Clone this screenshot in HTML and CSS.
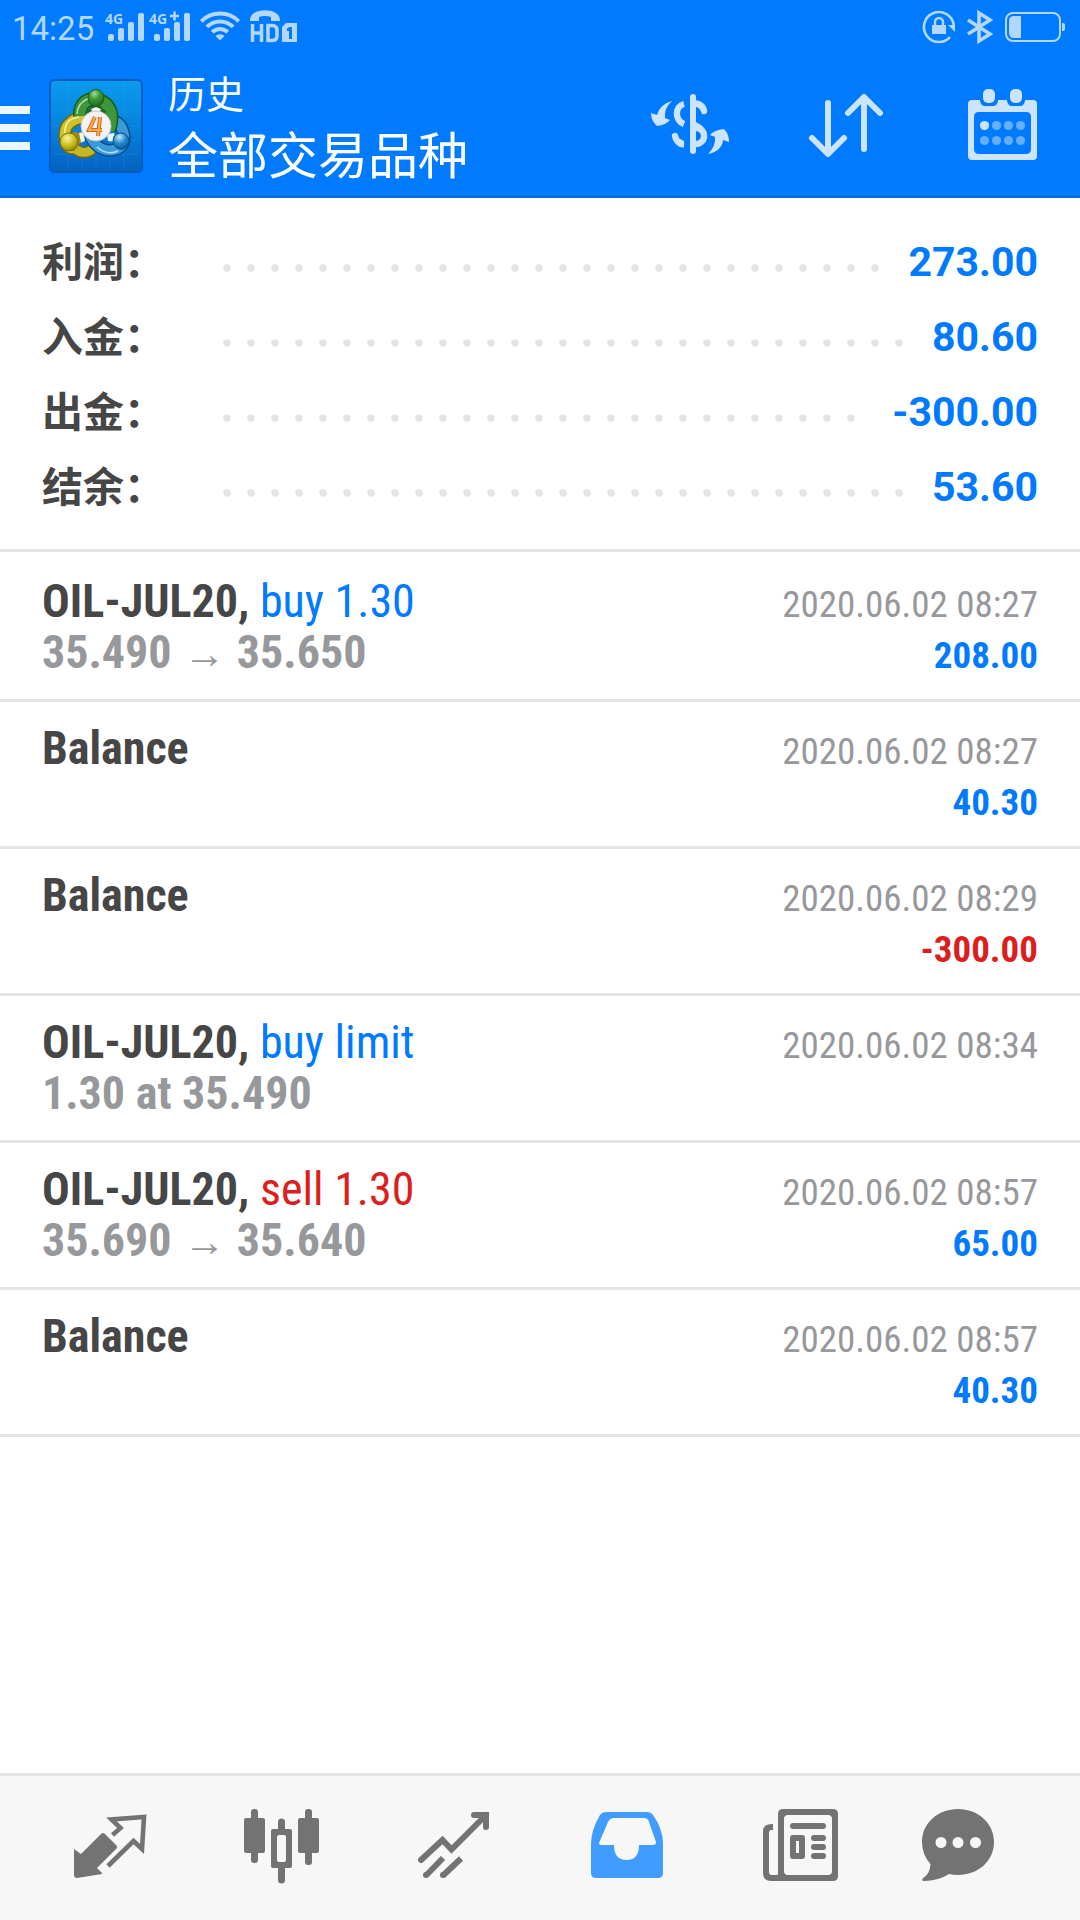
FILE: index.html
```html
<!DOCTYPE html>
<html lang="zh-CN">
<head>
<meta charset="utf-8">
<meta name="viewport" content="width=device-width, initial-scale=1">
<title>历史</title>
<link rel="stylesheet" href="styles.css">
</head>
<body>
<header class="header">
  <div class="status">
    <span class="clock">14:25</span>
    <svg class="signal" width="40" height="54" viewBox="0 0 40 54" aria-label="4G">
      <rect x="3" y="34" width="6" height="7" rx="2"/><rect x="13" y="28" width="6" height="13" rx="2"/><rect x="23" y="22" width="6" height="19" rx="2"/><rect x="33" y="13" width="6" height="28" rx="2"/>
      <text class="net" x="0" y="24">4G</text>
    </svg>
    <svg class="signal" width="42" height="54" viewBox="0 0 42 54" aria-label="4G+">
      <rect x="5" y="34" width="6" height="7" rx="2"/><rect x="15" y="28" width="6" height="13" rx="2"/><rect x="25" y="22" width="6" height="19" rx="2"/><rect x="35" y="13" width="6" height="28" rx="2"/>
      <text class="net" x="0" y="24">4G</text><path d="M21 16h9M25.500 11.500v9" stroke="currentColor" stroke-width="2.500"/>
    </svg>
    <svg class="wifi" width="42" height="54" viewBox="0 0 42 54" aria-label="Wi-Fi">
      <g fill="none" stroke="currentColor" stroke-width="4"><path d="M2.300 21.300a26.500 26.500 0 0 1 37.400 0"/><path d="M7.900 26.900a18.500 18.500 0 0 1 26.200 0"/><path d="M13.200 32.200a11 11 0 0 1 15.600 0"/></g>
      <path d="M21 40.500l-4.500-4.500a6.400 6.400 0 0 1 9 0z"/>
    </svg>
    <svg class="hd" width="48" height="54" viewBox="0 0 48 54" aria-label="HD1">
      <path d="M0 20C0 7 30 7 30 20v1h-9v-4q-6-2-12 0v4H0z"/>
      <path fill-rule="evenodd" d="M36 23h11v19H32V27zM37 28.500v2.500h2v8h3V27h-2.500z"/>
      <path d="M2.500 24v18M11.500 24v18M2.500 33h9M18 25.500v15h4q5 0 5-5v-5q0-5-5-5z" fill="none" stroke="currentColor" stroke-width="3.500"/>
    </svg>
    <span class="spacer"></span>
    <svg width="36" height="54" viewBox="0 0 36 54" aria-label="方向锁定">
      <path d="M31.800 25A15 15 0 1 0 28 37.200" fill="none" stroke="currentColor" stroke-width="2.600"/>
      <path d="M26 25h7v7z"/>
      <rect x="10" y="25" width="14" height="9"/><path d="M13 26v-4a4 4 0 0 1 8 0v4" fill="none" stroke="currentColor" stroke-width="2.400"/>
    </svg>
    <svg class="bluetooth" width="28" height="54" viewBox="0 0 28 54" aria-label="蓝牙"><path d="M2 20l22 14-11 7V13l11 7L2 34" fill="none" stroke="currentColor" stroke-width="3.600"/></svg>
    <svg class="battery" width="62" height="54" viewBox="0 0 62 54" aria-label="电量">
      <rect x="2" y="13" width="54" height="28" rx="7" fill="none" stroke="currentColor" stroke-width="2"/><path d="M10 16h7v22h-7q-5 0-5-5V21q0-5 5-5z"/><path d="M58 23h1q2 0 2 2v4q0 2-2 2h-1z"/>
    </svg>
  </div>
  <div class="toolbar">
    <button class="menu" type="button" aria-label="菜单"><span></span><span></span><span></span></button>
    <svg class="logo" width="94" height="94" viewBox="-1 -1 94 94" aria-hidden="true">
      <defs>
        <linearGradient id="tile" x1="0" y1="0" x2="0" y2="1"><stop offset="0" stop-color="#0a9bee"/><stop offset=".5" stop-color="#0682dd"/><stop offset="1" stop-color="#0562c0"/></linearGradient>
        <radialGradient id="gh" cx=".4" cy=".25" r=".8"><stop offset="0" stop-color="#a5dc9c"/><stop offset=".4" stop-color="#3f9a3c"/><stop offset="1" stop-color="#1a651e"/></radialGradient>
        <radialGradient id="yh" cx=".4" cy=".3" r=".8"><stop offset="0" stop-color="#fbf5a0"/><stop offset=".5" stop-color="#cdbf1d"/><stop offset="1" stop-color="#827309"/></radialGradient>
        <radialGradient id="bh" cx=".4" cy=".25" r=".8"><stop offset="0" stop-color="#bde9fc"/><stop offset=".5" stop-color="#288ccb"/><stop offset="1" stop-color="#07569a"/></radialGradient>
      </defs>
      <rect x="0" y="0" width="92" height="92" rx="5" fill="url(#tile)" stroke="#075dbb" stroke-width="2"/>
      <path d="M18 2v88M32 2v88M46 2v88M60 2v88M74 2v88M2 18h88M2 32h88M2 46h88M2 60h88M2 74h88" stroke="#36b0f2" stroke-opacity=".2"/>
      <g fill="none">
        <path d="M28 66C15 76 10 50 20 43Q27 36 38 39" stroke="#71680c" stroke-width="13"/><path d="M21 65C31 77 46 74 45 58" stroke="#71680c" stroke-width="12"/>
        <path d="M28 66C15 76 10 50 20 43Q27 36 38 39" stroke="#cfc22c" stroke-width="10"/><path d="M21 65C31 77 46 74 45 58" stroke="#c5b822" stroke-width="9"/>
        <path d="M40 56C46 68 56 73 67 69Q77 64 73 51 70 41 59 40" stroke="#064f91" stroke-width="13"/><path d="M40 56C46 68 56 73 67 69Q77 64 73 51 70 41 59 40" stroke="#3c9bd6" stroke-width="10"/>
        <path d="M30 36C29 18 46 15 56 24Q65 34 59 50" stroke="#155d19" stroke-width="14"/><path d="M30 36C29 18 46 15 56 24Q65 34 59 50" stroke="#3f953a" stroke-width="11"/>
        <path d="M27 34C28 20 42 14 53 20" stroke="#b2e3a7" stroke-width="1.500"/><path d="M15 53Q14 39 29 37" stroke="#f6efa1" stroke-width="1.500"/><path d="M47 67Q57 76 68 71" stroke="#b1e4fa" stroke-width="1.500"/>
      </g>
      <path d="M36 32l6-6h8l7 6-7 2-10 1z" fill="#1d6a22"/>
      <path d="M41 29l5-2 5 2-2 4h-6z" fill="#eef5ea"/><path d="M25 54l8-2 2 9-8 3z" fill="#f8f5d9"/><path d="M57 54l7-1 2 9-8-1z" fill="#e7f6ff"/>
      <ellipse cx="46" cy="18" rx="8" ry="8.500" fill="url(#gh)" stroke="#165e1a"/>
      <path d="M18 57q4-7 11-4l2 9-7 9q-13-3-6-14z" fill="#9b8c10"/><circle cx="19" cy="62" r="9" fill="url(#yh)" stroke="#7b6f0b"/>
      <path d="M63 57q5-5 11-4l6 8-8 9q-7-2-9-13z" fill="#136aab"/><circle cx="71" cy="61" r="8" fill="url(#bh)" stroke="#07508f"/>
      <circle cx="46" cy="46" r="15" fill="#f3f3f6" stroke="#c8c8ce"/>
      <path d="M45 37L39 50h13M50 37L48 56" fill="none" stroke="#cf6815" stroke-width="4"/><path d="M45 37L39 50h13M50 37L48 56" fill="none" stroke="#ffab51" stroke-width="2"/>
    </svg>
    <div class="titles">
      <h1 class="title">历史</h1>
      <p class="symbol">全部交易品种</p>
    </div>
    <button class="action" type="button" aria-label="交易品种">
      <svg width="96" height="96" viewBox="0 0 96 96">
        <rect x="48" y="18" width="6" height="60" rx="3"/>
        <g fill="none" stroke="currentColor" stroke-width="6.400" stroke-linecap="round"><path stroke-linecap="butt" d="M42 28C33 30 32 44 42 48"/><path d="M33 60Q34.500 66 39 68"/><path d="M54 27.500Q61 29 62 35"/></g>
        <path d="M42 65v7l-6-3 2-6z"/><path fill-rule="evenodd" d="M53 46C69 51 70 70 53 71.500zM54 55v10q5-1 5-5t-5-5z"/>
        <path d="M30 25Q22 32 23 42l5 2q-4 5-13 6-6-5-6-13l6 2Q18 28 30 25z"/><path d="M66 78Q80 75 81 64l6 2q0-8-5-13-10 1-14 6l5 2q1 9-7 17z"/>
      </svg>
    </button>
    <button class="action" type="button" aria-label="排序">
      <svg width="96" height="96" viewBox="0 0 96 96"><path d="M30 27v50M14 62l16 16 16-16M66 73V22M50 37l16-16 16 16" fill="none" stroke="currentColor" stroke-width="6" stroke-linecap="round" stroke-linejoin="round"/></svg>
    </button>
    <button class="action" type="button" aria-label="日期">
      <svg width="96" height="96" viewBox="0 0 96 96">
        <path fill-rule="evenodd" d="M18 24h8v1q1 5 5 5h8q4 0 5-5v-1h9v1q1 5 5 5h8q4 0 5-5v-1h8q4 0 4 4v52q0 4-4 4H18q-4 0-4-4V28q0-4 4-4zM25 36q-5 0-5 5v32q0 5 5 5h47q5 0 5-5V41q0-5-5-5z"/>
        <rect x="29" y="13" width="12" height="14" rx="5"/><rect x="56" y="13" width="12" height="14" rx="5"/><circle cx="30.500" cy="49.500" r="4.600"/>
        <g opacity=".5"><circle cx="42.500" cy="49.500" r="4.600"/><circle cx="54.500" cy="49.500" r="4.600"/><circle cx="66.500" cy="49.500" r="4.600"/><circle cx="30.500" cy="64.500" r="4.600"/><circle cx="42.500" cy="64.500" r="4.600"/><circle cx="54.500" cy="64.500" r="4.600"/><circle cx="66.500" cy="64.500" r="4.600"/></g>
      </svg>
    </button>
  </div>
</header>

<main class="content">
  <dl class="summary">
    <div class="total"><dt>利润：</dt><dd>273.00</dd></div>
    <div class="total"><dt>入金：</dt><dd>80.60</dd></div>
    <div class="total"><dt>出金：</dt><dd>-300.00</dd></div>
    <div class="total"><dt>结余：</dt><dd>53.60</dd></div>
  </dl>
  <ul class="deals">
    <li class="deal">
      <div class="info"><p><b>OIL-JUL20,</b> <span class="buy">buy 1.30</span></p><p class="price">35.490 <span class="arrow">→</span> 35.650</p></div>
      <div class="result"><time>2020.06.02 08:27</time><b class="buy">208.00</b></div>
    </li>
    <li class="deal">
      <div class="info"><p><b>Balance</b></p></div>
      <div class="result"><time>2020.06.02 08:27</time><b class="buy">40.30</b></div>
    </li>
    <li class="deal">
      <div class="info"><p><b>Balance</b></p></div>
      <div class="result"><time>2020.06.02 08:29</time><b class="sell">-300.00</b></div>
    </li>
    <li class="deal">
      <div class="info"><p><b>OIL-JUL20,</b> <span class="buy">buy limit</span></p><p class="price">1.30 at 35.490</p></div>
      <div class="result"><time>2020.06.02 08:34</time></div>
    </li>
    <li class="deal">
      <div class="info"><p><b>OIL-JUL20,</b> <span class="sell">sell 1.30</span></p><p class="price">35.690 <span class="arrow">→</span> 35.640</p></div>
      <div class="result"><time>2020.06.02 08:57</time><b class="buy">65.00</b></div>
    </li>
    <li class="deal">
      <div class="info"><p><b>Balance</b></p></div>
      <div class="result"><time>2020.06.02 08:57</time><b class="buy">40.30</b></div>
    </li>
  </ul>
</main>

<nav class="tabs">
  <button class="tab" type="button" aria-label="行情"><svg width="96" height="96" viewBox="0 0 96 96">
    <path d="M14 49l7 5 20-20q2-2 4 0l11 11q2 2 0 4L37 68l5 5v1l-25 4q-3 0-3-3z"/>
    <path d="M52.500 35l8-7-9-8.500L84 17l-2 32-8.500-8L48 66" fill="none" stroke="currentColor" stroke-width="4.600"/>
  </svg></button>
  <button class="tab" type="button" aria-label="图表"><svg width="96" height="96" viewBox="0 0 96 96">
    <rect x="11" y="18" width="21" height="35" rx="2"/><rect x="18" y="9" width="7" height="54" rx="3"/><rect x="65" y="18" width="21" height="35" rx="2"/><rect x="72" y="9" width="7" height="56" rx="3"/>
    <path d="M45 22a3.500 3.500 0 0 1 7 0v8h-7zM45 66h7v14a3.500 3.500 0 0 1-7 0z"/><path fill-rule="evenodd" d="M40 29h17q2 0 2 2v35q0 2-2 2H40q-2 0-2-2V31q0-2 2-2zM46 35q-2 0-2 2v23q0 2 2 2h5q2 0 2-2V37q0-2-2-2z"/>
  </svg></button>
  <button class="tab" type="button" aria-label="交易"><svg width="96" height="96" viewBox="0 0 96 96">
    <g fill="none" stroke="currentColor" stroke-width="6"><path stroke-linecap="round" d="M15 60l21.500-20 9 9.500L80 15M68 15h12v12"/><path d="M37 58L20 75.500M55 58.500L37 75.500"/></g><circle cx="20" cy="75" r="3"/><circle cx="37" cy="75" r="3"/>
  </svg></button>
  <button class="tab active" type="button" aria-label="历史" aria-current="page"><svg width="96" height="96" viewBox="0 0 96 96">
    <path fill-rule="evenodd" d="M29 12h40q4 0 6 3 10 14 10 29v29q0 5-5 5H18q-5 0-5-5V44q0-14 9-29 2-3 7-3zM36 18q-4 0-6 4l-9 21q0 2 2 2h13q0 15 12.500 15T61 45h14q3 0 3-3l-7-20q-1-4-5-4z"/>
  </svg></button>
  <button class="tab" type="button" aria-label="新闻"><svg width="96" height="96" viewBox="0 0 96 96">
    <path fill-rule="evenodd" d="M32 9h50q5 0 5 5v62q0 5-5 5H20q-8 0-8-8V31q0-7 9-7h1v6h-2q-2 0-2 3v39q0 3 3 3h5q1 0 1-2V14q0-5 5-5zM37 15q-4 0-4 4v52q0 4 4 4h40q4 0 4-4V19q0-4-4-4z"/>
    <rect x="39" y="23" width="36" height="6" rx="3"/><path fill-rule="evenodd" d="M42 35h9q3 0 3 3v18q0 3-3 3h-9q-3 0-3-3V38q0-3 3-3zM45 41v12h3V41z"/><rect x="60" y="35" width="15" height="6" rx="3"/><rect x="60" y="44" width="15" height="6" rx="3"/><rect x="60" y="53" width="15" height="6" rx="3"/>
  </svg></button>
  <button class="tab" type="button" aria-label="消息"><svg width="96" height="96" viewBox="0 0 96 96">
    <path fill-rule="evenodd" d="M34 9c20 0 36 14 36 33S54 75 34 75q-5 0-9-1-11 7-25 7-3 0-1-3 7-4 7.500-14Q-2 55-2 42C-2 23 14 9 34 9zM17 37a5.500 5.500 0 1 0 0 11 5.500 5.500 0 0 0 0-11zM34 37a5.500 5.500 0 1 0 0 11 5.500 5.500 0 0 0 0-11zM51.500 37a5.500 5.500 0 1 0 0 11 5.500 5.500 0 0 0 0-11z"/>
  </svg></button>
</nav>
</body>
</html>
```

FILE: styles.css
```css
* { box-sizing: border-box; margin: 0; padding: 0; }

body {
  min-height: 100vh;
  display: flex;
  flex-direction: column;
  background: #fff;
  color: #464646;
  font-family: Roboto, "Noto Sans CJK SC", sans-serif;
}

button { border: 0; background: none; color: inherit; font: inherit; }
svg { display: block; flex: none; fill: currentColor; overflow: visible; }

.header { background: #007aff; color: #fff; border-bottom: 3px solid #0070e8; }

.status {
  display: flex;
  align-items: center;
  height: 54px;
  padding: 0 14px 0 12px;
  color: #b3d7ff;
}
.clock { width: 93px; font-size: 33px; line-height: 54px; padding-top: 3px; }
.signal { margin-right: 4px; }
.net { font: bold 14px "Open Sans", sans-serif; }
.wifi { margin: 0 9px 0 4px; }
.spacer { flex: 1; }
.bluetooth { margin: 0 10px 0 8px; }

.toolbar { display: flex; align-items: center; height: 141px; padding-bottom: 2px; }
.menu { display: flex; flex-direction: column; gap: 10px; width: 30px; padding-top: 9px; }
.menu span { height: 8px; background: #eef7ff; }
.logo { margin: 4px 25px 0 19px; }
.titles { flex: 1; padding-top: 4px; white-space: nowrap; font-family: "Noto Sans CJK SC", sans-serif; }
.title { font-size: 38px; line-height: 52px; font-weight: 400; }
.symbol { font-size: 50px; line-height: 68px; }
.action { display: flex; justify-content: center; width: 156px; color: #cce4ff; }

.content { flex: 1; }

.summary { padding: 27px 42px 24px; border-bottom: 3px solid #e4e4e4; }
.total { display: flex; height: 75px; font-size: 41px; line-height: 75px; }
.total dt { width: 181px; font-weight: 700; line-height: 68px; font-family: "Noto Sans CJK SC", sans-serif; }
.total dd { flex: 1; display: flex; justify-content: flex-end; color: #007aff; font-weight: 700; }
.total dd::before {
  content: "";
  flex: 1;
  margin-right: 24px;
  background: radial-gradient(circle at 4px 4px, #e4e4e4 3px, #e4e4e480 4px, transparent 4px) 0 39px / 24px 8px repeat-x;
}

.deals { list-style: none; padding-top: 3px; font-family: "Roboto Condensed", Roboto, sans-serif; }
.deal {
  display: flex;
  justify-content: space-between;
  height: 147px;
  padding: 21px 42px 0;
  border-bottom: 3px solid #e4e4e4;
  line-height: 51px;
}
.info { font-size: 46px; }
.price { color: #97989b; font-weight: 700; }
.arrow { display: inline-block; width: 44px; text-align: center; font-family: "Liberation Sans", sans-serif; font-size: 42px; line-height: 40px; }
.result { display: flex; flex-direction: column; align-items: flex-end; padding-top: 3px; font-size: 37px; }
.result time { color: #97989b; }
.buy { color: #007aff; }
.sell { color: #db1f1f; }

.tabs {
  display: flex;
  height: 147px;
  padding: 0 22px;
  border-top: 3px solid #e4e4e4;
  background: #f7f7f7;
  color: #737373;
}
.tab { flex: 1; display: flex; justify-content: center; align-items: center; }
.active { color: #419cff; }
```
